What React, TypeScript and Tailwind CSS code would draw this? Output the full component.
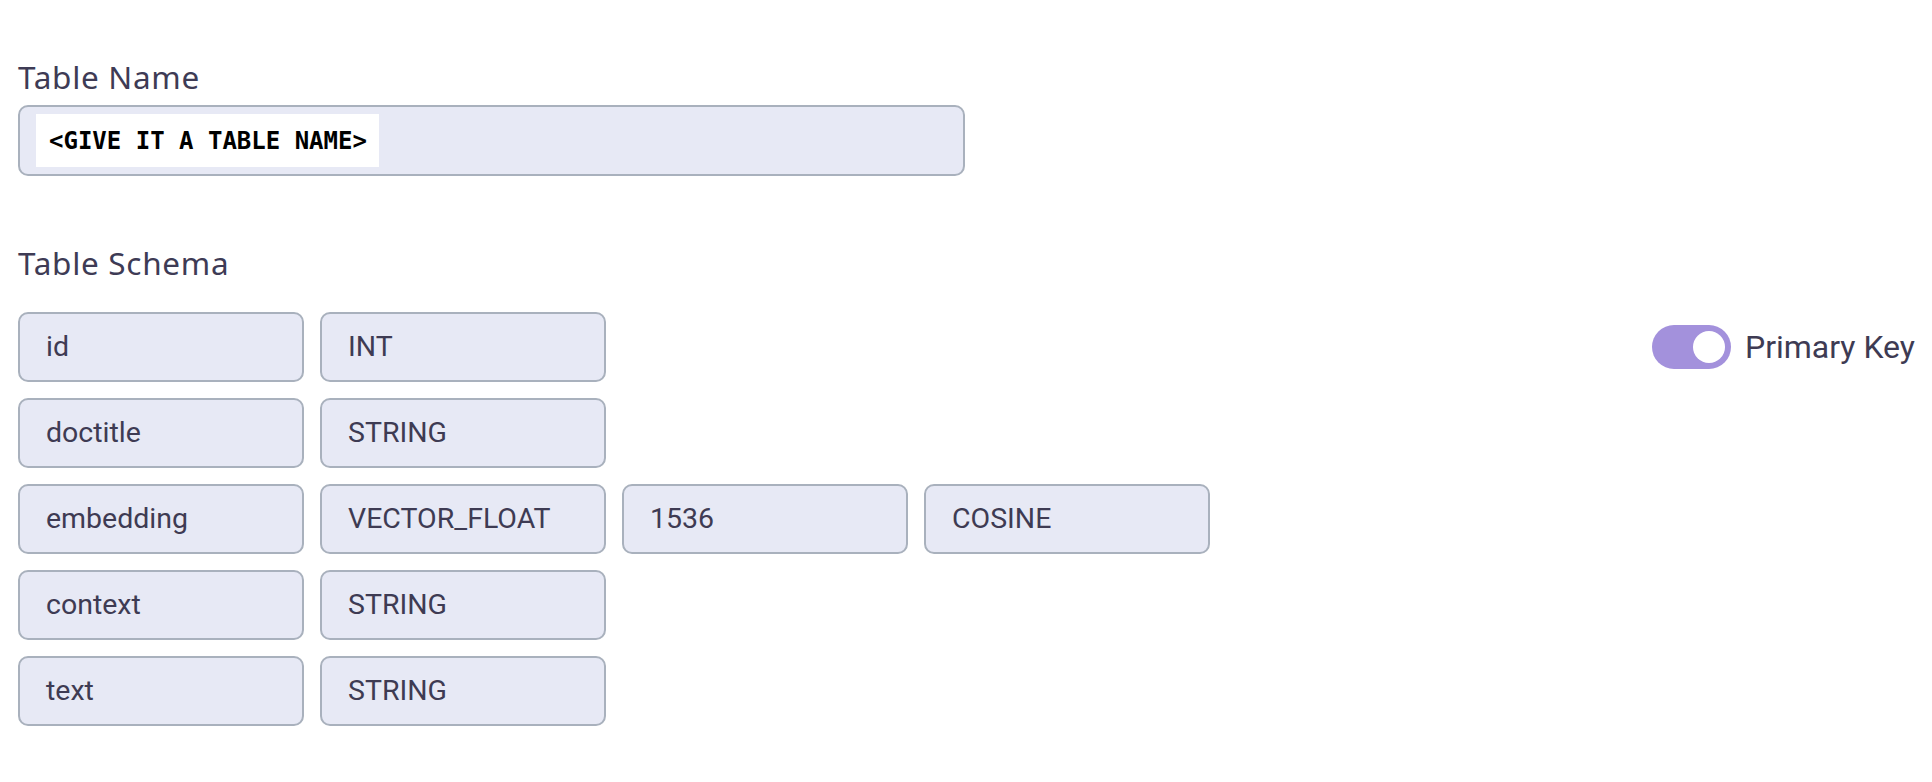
import React from "react";

const rows: string[][] = [
  ["id", "INT"],
  ["doctitle", "STRING"],
  ["embedding", "VECTOR_FLOAT", "1536", "COSINE"],
  ["context", "STRING"],
  ["text", "STRING"],
];

function Field({ value }: { value: string }) {
  return (
    <div className="flex h-[70px] w-[286px] shrink-0 items-center rounded-[10px] border-2 border-[#a9b1bd] bg-[#e7e9f5] pl-[26px] text-[28.5px] text-[#3e3b53] [font-family:Roboto,'Liberation_Sans',sans-serif]">
      {value}
    </div>
  );
}

export default function App() {
  return (
    <div className="min-h-screen bg-white pl-[18px] pr-[17px] pt-[60px]">
      <div className="text-[31.5px] leading-[34px] tracking-[0.7px] text-[#3e3b55] [font-family:'Noto_Sans',Lato,sans-serif]">
        Table Name
      </div>
      <div className="mt-[11px] flex h-[71px] w-[947px] items-center rounded-[10px] border-2 border-[#a9b1bd] bg-[#e7e9f5] pl-[16px]">
        <span className="flex h-[53px] w-[343px] items-center bg-white pl-[13px] text-[24px] font-bold text-black [font-family:'DejaVu_Sans_Mono','Liberation_Mono',monospace]">
          &lt;GIVE IT A TABLE NAME&gt;
        </span>
      </div>
      <div className="mt-[70px] text-[31.5px] leading-[34px] tracking-[0.7px] text-[#3e3b55] [font-family:'Noto_Sans',Lato,sans-serif]">
        Table Schema
      </div>
      <div className="mt-[32px] flex flex-col gap-[16px]">
        {rows.map((r, i) => (
          <div key={i} className="flex items-center gap-[16px]">
            {r.map((v, j) => (
              <Field key={j} value={v} />
            ))}
            {i === 0 && (
              <div className="ml-auto flex items-center gap-[14px]">
                <div className="flex h-[44px] w-[79px] items-center justify-end rounded-full bg-[#a391dc] pr-[6px]">
                  <div className="h-[32px] w-[32px] rounded-full bg-white" />
                </div>
                <span className="text-[32px] text-[#3e3b53] [font-family:Roboto,'Liberation_Sans',sans-serif]">
                  Primary Key
                </span>
              </div>
            )}
          </div>
        ))}
      </div>
    </div>
  );
}
